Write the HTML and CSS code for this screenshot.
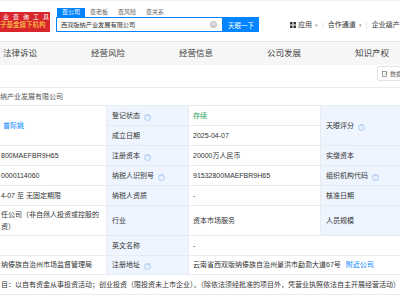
FILE: index.html
```html
<!DOCTYPE html>
<html lang="zh-CN">
<head>
  <meta charset="UTF-8" />
  <meta name="viewport" content="width=device-width, initial-scale=1.0" />
  <title>西双版纳产业发展有限公司</title>
  <link rel="stylesheet" href="styles.css">
</head>
<body>
  <div class="page">
    <header class="topbar">
      <div class="logo">
        <span class="logo-top">业查询工具</span>
        <span class="logo-sub">子基金旗下机构</span>
      </div>

      <div class="search">
        <div class="search-tabs">
          <span class="tab active">查公司</span>
          <span class="tab">查老板</span>
          <span class="tab">查风险</span>
          <span class="tab">查关系</span>
        </div>
        <div class="search-row">
          <div class="search-box">
            <span class="query">西双版纳产业发展有限公司</span>
            <span class="clear">&times;</span>
          </div>
          <button type="button" class="search-btn">天眼一下</button>
        </div>
      </div>

      <nav class="top-links">
        <svg class="grid-icon" width="6" height="6" viewBox="0 0 6 6">
          <rect x="0" y="0" width="2.5" height="2.5" fill="#333"/>
          <rect x="3.5" y="0" width="2.5" height="2.5" fill="#333"/>
          <rect x="0" y="3.5" width="2.5" height="2.5" fill="#333"/>
          <rect x="3.5" y="3.5" width="2.5" height="2.5" fill="#333"/>
        </svg>
        <span>应用</span><span class="caret">&#9662;</span>
        <span class="sep">|</span>
        <span>合作通道</span><span class="caret">&#9662;</span>
        <span class="sep">|</span>
        <span>企业级产品</span>
      </nav>
    </header>

    <nav class="sections">
      <span class="section">法律诉讼</span>
      <span class="section">经营风险</span>
      <span class="section">经营信息</span>
      <span class="section">公司发展</span>
      <span class="section">知识产权</span>
    </nav>

    <div class="toolbar">
      <button type="button" class="fix-btn">
        <svg width="6" height="6" viewBox="0 0 6 6">
          <rect x="0.5" y="0.5" width="4" height="5" fill="none" stroke="#888" stroke-width="0.8"/>
          <path d="M3 3.5 L5.5 1" stroke="#888" stroke-width="0.8"/>
        </svg>
        数据纠错
      </button>
    </div>

    <div class="company-name">纳产业发展有限公司</div>

    <table class="info">
      <colgroup>
        <col style="width:107px">
        <col style="width:82px">
        <col style="width:132px">
        <col style="width:80px">
        <col style="width:80px">
      </colgroup>
      <tr>
        <td class="edge" rowspan="2"><a class="link">曾际姚</a></td>
        <td class="label">登记状态<i class="tip">?</i></td>
        <td class="ok">存续</td>
        <td class="label" rowspan="2">天眼评分<i class="tip">?</i></td>
        <td rowspan="2"></td>
      </tr>
      <tr>
        <td class="label">成立日期</td>
        <td>2025-04-07</td>
      </tr>
      <tr>
        <td class="edge">800MAEFBR9H65</td>
        <td class="label">注册资本<i class="tip">?</i></td>
        <td>20000万人民币</td>
        <td class="label">实缴资本</td>
        <td></td>
      </tr>
      <tr>
        <td class="edge">0000114060</td>
        <td class="label">纳税人识别号<i class="tip">?</i></td>
        <td>91532800MAEFBR9H65</td>
        <td class="label">组织机构代码<i class="tip">?</i></td>
        <td></td>
      </tr>
      <tr>
        <td class="edge">4-07 至 无固定期限</td>
        <td class="label">纳税人资质</td>
        <td>-</td>
        <td class="label">核准日期</td>
        <td></td>
      </tr>
      <tr class="tall">
        <td class="edge">任公司（非自然人投资或控股的<br>资）</td>
        <td class="label">行业</td>
        <td>资本市场服务</td>
        <td class="label">人员规模</td>
        <td></td>
      </tr>
      <tr>
        <td class="edge"></td>
        <td class="label">英文名称</td>
        <td colspan="3">-</td>
      </tr>
      <tr class="short">
        <td class="edge">纳傣族自治州市场监督管理局</td>
        <td class="label">注册地址<i class="tip">?</i></td>
        <td colspan="3">云南省西双版纳傣族自治州景洪市勐泐大道67号<a class="link near">附近公司</a></td>
      </tr>
      <tr>
        <td class="edge scope" colspan="5">目：以自有资金从事投资活动；创业投资（限投资未上市企业）。（除依法须经批准的项目外，凭营业执照依法自主开展经营活动）</td>
      </tr>
    </table>
  </div>
</body>
</html>
```

FILE: styles.css
```css
body {
  margin: 0;
  font-family: "Liberation Sans", "Noto Sans CJK SC", sans-serif;
  color: #333;
  background: #fff;
  overflow: hidden;
}

.page {
  width: 440px;
}

/* header */
.topbar {
  display: flex;
  align-items: flex-start;
  height: 33px;
  padding-top: 7px;
  border-top: 1px solid #f0f0f0;
  border-bottom: 1px solid #e6e6e6;
}

.logo {
  display: flex;
  flex-direction: column;
  width: 50px;
  height: 20px;
  margin-top: 4px;
  padding-top: 1px;
  box-sizing: border-box;
  background: #d8262c;
  overflow: hidden;
  white-space: nowrap;
}

.logo-top {
  font-size: 6px;
  line-height: 8px;
  letter-spacing: 4px;
  padding-left: 3px;
  color: #fff;
}

.logo-sub {
  font-size: 6.5px;
  line-height: 8px;
  color: #ffdd4d;
}

.search {
  margin-left: 6px;
}

.search-tabs {
  display: flex;
  margin-left: 1px;
}

.tab {
  width: 28px;
  text-align: center;
  font-size: 6px;
  line-height: 9px;
  color: #666;
}

.tab.active {
  background: #0084ff;
  color: #fff;
}

.search-row {
  display: flex;
  height: 15px;
}

.search-box {
  display: flex;
  align-items: center;
  width: 167px;
  padding-left: 4px;
  box-sizing: border-box;
  border: 1px solid #0084ff;
}

.query {
  flex: 1;
  font-size: 6.2px;
  color: #333;
}

.clear {
  width: 7px;
  height: 7px;
  margin-right: 5px;
  border-radius: 50%;
  background: #c9c9c9;
  color: #fff;
  font-size: 6px;
  line-height: 7px;
  text-align: center;
}

.search-btn {
  width: 36px;
  padding: 0;
  border: none;
  background: #0084ff;
  color: #fff;
  font-family: inherit;
  font-size: 6.5px;
}

.top-links {
  display: flex;
  align-items: center;
  margin-left: 31px;
  margin-top: 12px;
  font-size: 7px;
  line-height: 10px;
  white-space: nowrap;
}

.grid-icon {
  margin-right: 2px;
}

.caret {
  margin-left: 3px;
  font-size: 5px;
  color: #999;
}

.sep {
  margin: 0 4px;
  color: #ddd;
}

/* section tabs */
.sections {
  display: flex;
  height: 23px;
  background: #f6f6f6;
}

.section {
  width: 87px;
  padding-left: 3px;
  font-size: 8.5px;
  line-height: 23px;
  color: #444;
}

.toolbar {
  display: flex;
  justify-content: flex-end;
  height: 21px;
  padding-top: 1px;
  padding-right: 18px;
  box-sizing: content-box;
  border-bottom: 1px solid #ececec;
}

.fix-btn {
  display: flex;
  align-items: center;
  gap: 2px;
  height: 15px;
  width: 45px;
  padding: 0 4px;
  border: 1px solid #e2e2e2;
  border-radius: 2px;
  background: #fff;
  color: #666;
  font-family: inherit;
  font-size: 6px;
  white-space: nowrap;
}

.company-name {
  height: 17px;
  font-size: 7px;
  line-height: 17px;
  color: #555;
}

/* info table */
.info {
  width: 481px;
  margin-left: -1px;
  border-collapse: collapse;
  table-layout: fixed;
}

.info td {
  height: 19px;
  padding: 0 4px;
  border: 1px solid #e8ebf0;
  font-size: 7px;
  line-height: 10px;
  color: #333;
  white-space: nowrap;
  overflow: hidden;
  vertical-align: middle;
}

.info td.edge {
  padding-left: 1px;
}

.info td.label {
  padding-left: 5px;
  background: #eef5fe;
}

.info tr.tall td {
  height: 29px;
  line-height: 12px;
}

.info tr.short td {
  height: 18px;
}

.info td.scope {
  padding-left: 1px;
}

.ok {
  color: #2aa55a !important;
}

.link {
  color: #0084ff;
}

.edge .link {
  margin-left: 2px;
}

.near {
  margin-left: 5px;
}

.tip {
  display: inline-block;
  width: 5px;
  height: 5px;
  margin-left: 4px;
  border: 1px solid #a8c8f0;
  border-radius: 50%;
  color: #a8c8f0;
  font-style: normal;
  font-size: 4.5px;
  line-height: 5px;
  text-align: center;
  vertical-align: -1px;
}
```
